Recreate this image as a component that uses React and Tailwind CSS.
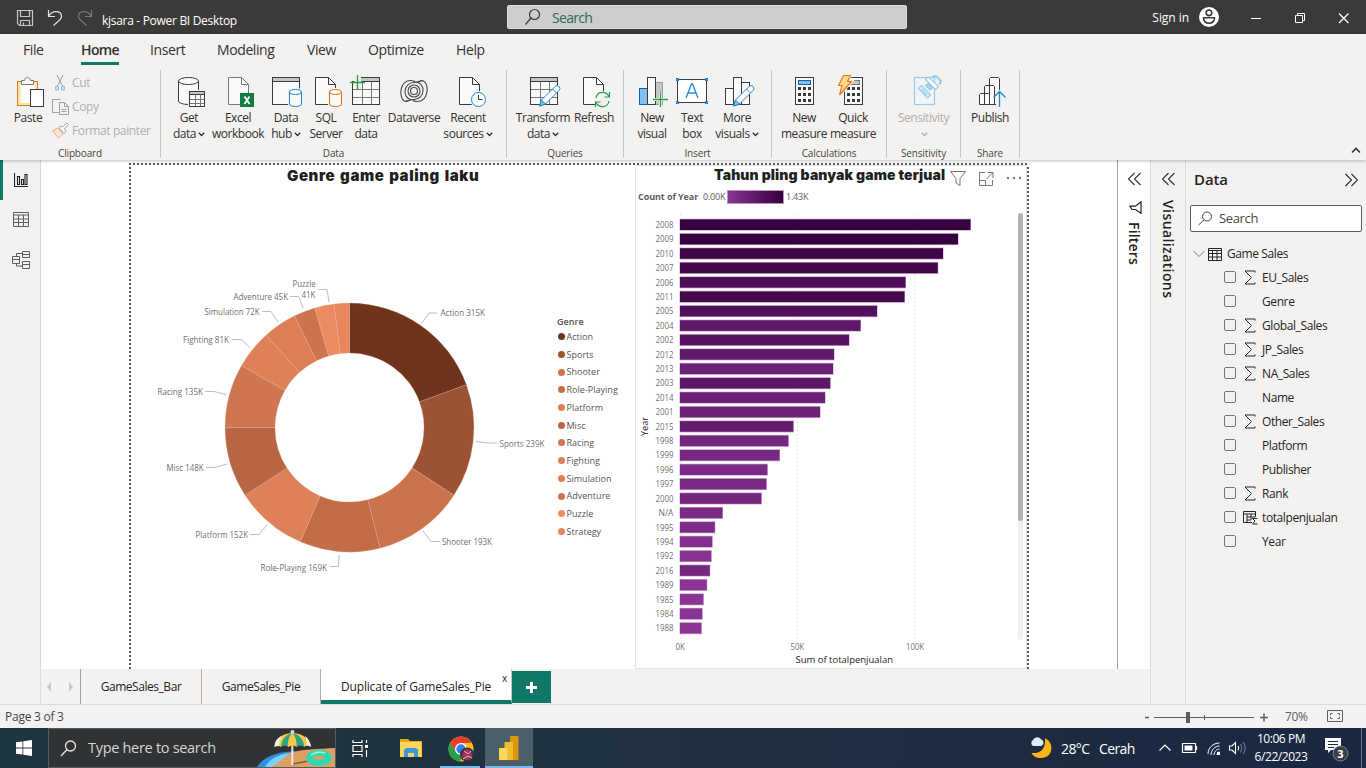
import React from "react";

const INK = "#3b3a39";

/* Icon frame: the viewBox origin is the drawing's own origin */
function Ic({ x, y = 74, w = 36, h = 34, children, className = "" }) {
  return (
    <svg className={"shrink-0 " + className} width={w} height={h} viewBox={`${x} ${y} ${w} ${h}`} fill="none" stroke={INK} strokeWidth="1">
      {children}
    </svg>
  );
}

function Page({ x, color = INK }) {
  return (
    <g stroke={color} fill="#fafafa">
      <path d={`M${x} 77.5h13l7 7v20h-20z`} />
      <path d={`M${x + 13} 77.5v7h7`} fill="none" />
    </g>
  );
}

function Grid({ x, y, s, head = 4, n = 3 }) {
  const step = (s - head) / n;
  return (
    <g>
      <rect x={x} y={y} width={s} height={s} fill="#fafafa" />
      <rect x={x} y={y} width={s} height={head} fill="#c8c6c4" />
      {Array.from({ length: n - 1 }, (_, i) => (
        <path key={i} stroke="#797775" d={`M${x} ${Math.round(y + head + step * (i + 1)) + 0.5}h${s}M${Math.round(x + (s / n) * (i + 1)) + 0.5} ${y + head}v${s - head}`} />
      ))}
      <rect x={x} y={y} width={s} height={s} />
    </g>
  );
}

function Cyl({ x, y, w, h, r, color = INK }) {
  return (
    <g stroke={color} fill="#fafafa">
      <path d={`M${x} ${y + r}v${h - 2 * r}a${w / 2} ${r} 0 0 0 ${w} 0v${-(h - 2 * r)}`} />
      <ellipse cx={x + w / 2} cy={y + r} rx={w / 2} ry={r} />
    </g>
  );
}

function Pencil({ x, y }) {
  return (
    <g transform={`translate(${x} ${y})`} stroke="#1e88d2">
      <path d="M0 0l2-6L15.500-19.500a2.800 2.800 0 0 1 4 4L6-2z" fill="#fff" />
      <path d="M0 0l2-6 4 4z" fill="#83beec" />
      <path d="M13-17l4 4" />
    </g>
  );
}

function Calc({ x, blue }) {
  const dots = [];
  for (let r = 0; r < 3; r++) for (let c = 0; c < 3; c++) dots.push([x + 2.5 + c * 5, 87 + r * 6]);
  return (
    <g>
      <rect x={x} y="77.500" width="18" height="27" fill="#fafafa" />
      <rect x={x + 3} y="80.500" width="12" height="4" fill={blue ? "#83beec" : "#c8c6c4"} stroke={blue ? "#1064ad" : "#797775"} />
      {dots.map(([a, b], i) => <rect key={i} x={a} y={b} width="3" height="3" fill={INK} stroke="none" />)}
    </g>
  );
}

function Caret({ light }) {
  return (
    <svg className="ml-0.5 inline-block" width="7" height="5" viewBox="0 0 7 5" fill="none" stroke={light ? "#b1afad" : "#323130"} strokeWidth="1.300">
      <path d="M.8.8l2.700 2.700L6.200.8" />
    </svg>
  );
}

function Btn({ width, a, b, caret, light, children }) {
  return (
    <div className={"flex shrink-0 flex-col items-center " + width + (light ? " text-[#b1afad]" : "")}>
      {children}
      <div className="mt-0.5 flex h-4 items-center whitespace-nowrap">{a}</div>
      <div className="flex h-4 items-center whitespace-nowrap">{b}{caret && <Caret light={light} />}</div>
    </div>
  );
}

function Group({ width, label, pad = "", children }) {
  return (
    <div className={"flex h-[88px] shrink-0 flex-col border-r border-[#c8c6c4] " + width}>
      <div className={"flex h-[75px] pt-1 " + pad}>{children}</div>
      <div className="h-[13px] text-center text-[10px] leading-[16px] tracking-[-0.150px] text-[#484644]">{label}</div>
    </div>
  );
}

function TitleBar() {
  return (
    <header className="flex h-[34px] shrink-0 items-center bg-[#3b3a39] text-white">
      <svg width="102" height="34" fill="none" stroke="#e1dfdd" strokeWidth="1.200">
        <path d="M17.500 10.500h15v15h-13l-2-2zM20.500 10.500v6h9v-6M20.500 25.500v-5h9v5M23.500 25v-2.500" stroke="#c8c6c4" />
        <path d="M48.500 10v6.500h6.500M49 16c3-6 12-5.500 12.500 0 .3 3.500-3.500 5-8 9.500" />
        <path d="M91.500 10v6.500H85M91 16c-3-6-12-5.500-12.500 0-.3 3.500 3.500 5 8 9.500" stroke="#797775" />
      </svg>
      <div className="w-[405px] pt-2 text-[12px] tracking-[-0.300px]">kjsara - Power BI Desktop</div>
      <div className="flex h-6 w-[400px] items-center rounded-[2px] border border-[#dddbd9] bg-[#cecdcb] pl-4 text-[14px] tracking-[-0.700px] text-[#2b6a5c]">
        <svg className="mr-[11px]" width="17" height="18" fill="none" stroke="#3b3a39" strokeWidth="1.200"><circle cx="10.500" cy="6.500" r="5" /><path d="M7 10L1.500 16.500" /></svg>
        Search
      </div>
      <div className="ml-auto flex items-center">
        <span className="pt-0.5 text-[12px] tracking-[-0.050px]">Sign in</span>
        <svg className="ml-[10px]" width="20" height="20" fill="none" stroke="#3b3a39" strokeWidth="1.600">
          <circle cx="10" cy="10" r="10" fill="#fff" stroke="none" /><circle cx="10" cy="5.800" r="2.800" />
          <path d="M4.500 10.800h11c.3 3-2 5.500-5.500 5.500s-5.800-2.500-5.500-5.500z" />
        </svg>
        <svg width="147" height="34" fill="none" stroke="#fff" strokeWidth="1">
          <path d="M32 18.500h10M76.500 15.500h7v7h-7zM78.500 15.500v-2h7v7h-2" />
          <path d="M120 13.500l9.500 9.500m0-9.500l-9.500 9.500" strokeWidth="1.300" />
        </svg>
      </div>
    </header>
  );
}

function Ribbon() {
  return (
    <section className="relative z-10 flex h-[126px] shrink-0 flex-col bg-[#f3f2f1] text-[#323130] shadow-[0_1px_3px_rgba(0,0,0,0.250)]">
      <nav className="flex h-9 text-[14px] leading-8 tracking-[-0.400px]">
        <span className="ml-[23px] w-[58px]">File</span>
        <span className="w-[69px]"><span className="inline-block h-[31px] border-b-[3px] border-[#117865] font-semibold leading-8 tracking-[-0.600px]">Home</span></span>
        <span className="w-[67px]">Insert</span>
        <span className="w-[90px]">Modeling</span>
        <span className="w-[61px]">View</span>
        <span className="w-[88px]">Optimize</span>
        <span>Help</span>
      </nav>
      <div className="flex text-[12px] tracking-[-0.450px]">
        <Group width="w-[161px]" label="Clipboard" pad="pl-[10px]">
          <Btn width="w-9" a="Paste">
            <Ic x={10}>
              <rect x="17.500" y="81.500" width="20" height="24" fill="#fbe3ae" stroke="#e07b1a" />
              <rect x="20.500" y="84" width="14.500" height="19" fill="#fff" stroke="none" />
              <path d="M21.500 84.500v-4h3c0-4 6-4 6 0h3v4z" fill="#fafafa" stroke="#797775" />
              <rect x="30.500" y="89.500" width="13" height="17" fill="#fff" />
            </Ic>
          </Btn>
          <div className="ml-[5px] flex flex-col tracking-[-0.370px] text-[#b1afad]">
            {[["Cut", "cut"], ["Copy", "copy"], ["Format painter", "fmt"]].map(([t, k], i) => (
              <div key={k} className={"flex h-6 items-center " + (i === 0 ? "-mt-[3px]" : "")}>
                <svg className="mr-[3px]" width="18" height="18" fill="none" stroke="#a19f9d">
                  {k === "cut" && <><path d="M6 1l6 12M12 1L6 13" /><path d="M4.500 12.500h3v3.500h-3zM10.500 12.500h3v3.500h-3z" stroke="#8fbfe0" fill="#cfe4f3" /></>}
                  {k === "copy" && <><path d="M8 14.500H1.500v-13h8M9 4.500h4.500l4 4v8H8.500v-12z" /><path d="M13.500 4.500v4h4M10.500 11.500h5M10.500 13.500h5" /></>}
                  {k === "fmt" && <><path d="M1.500 9l5-3 5.500 6-4.500 4z" fill="#fbe2cf" stroke="#e3b08a" /><path d="M8 6l5 5.500 2-2-1.500-2.500 4-4.500-1.500-1.500-4.500 4-2-1z" fill="#fff" /></>}
                </svg>
                {t}
              </div>
            ))}
          </div>
        </Group>

        <Group width="w-[346px]" label="Data" pad="pl-1">
          <Btn width="w-12" a="Get" b="data" caret>
            <Ic x={171}><Cyl x={178.5} y={77.5} w={20} h={27} r={3.5} /><path d="M188 90h17v17h-17z" fill="#f3f2f1" stroke="none" /><Grid x={189.5} y={91.500} s={15} head={3} /></Ic>
          </Btn>
          <Btn width="w-[50px]" a="Excel" b="workbook">
            <Ic x={220}><Page x={228.5} color="#797775" /><rect x="240" y="93" width="14" height="14" fill="#107c41" stroke="none" /><path d="M244.500 96.500l5 7.500m0-7.500l-5 7.500" stroke="#fff" strokeWidth="1.800" /></Ic>
          </Btn>
          <Btn width="w-[46px]" a="Data" b="hub" caret>
            <Ic x={268}><rect x="272.500" y="77.500" width="27" height="27" fill="#fafafa" /><rect x="272.500" y="77.500" width="27" height="4" fill="#c8c6c4" /><path d="M288 88.500h15v19h-15z" fill="#f3f2f1" stroke="none" /><Cyl x={289.5} y={89.500} w={12} h={17} r={2.500} color="#1e88d2" /></Ic>
          </Btn>
          <Btn width="w-[34px]" a="SQL" b="Server">
            <Ic x={308}><Page x={315.5} /><path d="M328 88h16v20h-16z" fill="#f3f2f1" stroke="none" /><Cyl x={329.5} y={89.500} w={12} h={17} r={2.500} color="#d8721a" /></Ic>
          </Btn>
          <Btn width="w-[46px]" a="Enter" b="data">
            <Ic x={348}><Grid x={352.5} y={77.500} s={27} /><path d="M349 75h12v6h-12zM354.500 80h6.500v9h-6.500z" fill="#f3f2f1" stroke="none" /><path d="M350 82.500h15M357.500 75v15" stroke="#2a9d48" strokeWidth="1.300" /></Ic>
          </Btn>
          <Btn width="w-[50px]" a="Dataverse">
            <Ic x={396}>
              <g strokeWidth="1.100" stroke="#484644">
                <circle cx="414" cy="91" r="6" /><circle cx="414" cy="91" r="3.500" />
                <path d="M423 80.500c-3 .5-5 2-9 2-5 0-9 4-9 9 0 4 2.500 7 5.500 8-2 1.500-4 2-6 1.500-6-3-5-20 5.500-20.500 3.500-.2 5 1 6 2" />
                <path d="M405 101.500c3-.5 5-2 9-2 5 0 9-4 9-9 0-4-2.500-7-5.500-8 2-1.500 4-2 6-1.500 6 3 5 20-5.500 20.500-3.500.2-5-1-6-2" />
              </g>
            </Ic>
          </Btn>
          <Btn width="w-[58px]" a="Recent" b="sources" caret>
            <Ic x={450}><Page x={459.5} /><circle cx="478.500" cy="99.500" r="8.500" fill="#f3f2f1" stroke="none" /><circle cx="478.500" cy="99.500" r="7" fill="#fff" stroke="#1e88d2" /><path d="M478.500 95v4.500h4" /></Ic>
          </Btn>
        </Group>

        <Group width="w-[117px]" label="Queries" pad="pl-[10px]">
          <Btn width="w-[52px]" a="Transform" b="data" caret>
            <Ic x={525}><Grid x={530.5} y={77.500} s={27} /><Pencil x={539.5} y={106} /></Ic>
          </Btn>
          <Btn width="w-[50px]" a="Refresh">
            <Ic x={576}><Page x={583.5} /><circle cx="602.500" cy="99.500" r="8.500" fill="#f3f2f1" stroke="none" /><path d="M596 98c1-7 10-7.500 13-1.500M609.500 92v5h-5M609 101c-1 7-10 7.500-13 1.500M595.500 107v-5h5" stroke="#2a9d48" strokeWidth="1.200" /></Ic>
          </Btn>
        </Group>

        <Group width="w-[148px]" label="Insert" pad="pl-[6px]">
          <Btn width="w-11" a="New" b="visual">
            <Ic x={634}>
              <rect x="639.500" y="88.500" width="8" height="16" fill="#83beec" stroke="#1064ad" /><rect x="655.500" y="82.500" width="7" height="22" fill="#c8c6c4" stroke="#a19f9d" />
              <rect x="647.500" y="77.500" width="8" height="27" fill="#fafafa" /><path d="M653 99.500h15M660.500 92v15" stroke="#f3f2f1" strokeWidth="3" /><path d="M653 99.500h15M660.500 92v15" stroke="#2a9d48" strokeWidth="1.300" />
            </Ic>
          </Btn>
          <Btn width="w-9" a="Text" b="box">
            <Ic x={674}><rect x="677.500" y="79.500" width="29" height="23" fill="#fff" /><g fill="#1e88d2" stroke="none"><path d="M676 78h3v3h-3zM705 78h3v3h-3zM676 101h3v3h-3zM705 101h3v3h-3z" /></g><path d="M686 98l5.500-14h1l5.500 14M688 93h8" stroke="#1e88d2" strokeWidth="1.300" /></Ic>
          </Btn>
          <Btn width="w-[54px]" a="More" b="visuals" caret>
            <Ic x={719}><g fill="#fafafa"><rect x="725.500" y="88.500" width="8" height="16" /><rect x="741.500" y="82.500" width="8" height="22" /><rect x="733.500" y="77.500" width="8" height="27" /></g><Pencil x={733.5} y={106} /></Ic>
          </Btn>
        </Group>

        <Group width="w-[115px]" label="Calculations" pad="pl-2">
          <Btn width="w-12" a="New" b="measure"><Ic x={785}><Calc x={794.5} blue /></Ic></Btn>
          <Btn width="w-[50px]" a="Quick" b="measure">
            <Ic x={835}><Calc x={844.5} /><path d="M843.500 75.500h7l-3 6h4l-12 13.500 2.500-9.500h-3.500z" fill="#ffd36b" stroke="#f3f2f1" strokeWidth="3" /><path d="M843.500 75.500h7l-3 6h4l-12 13.500 2.500-9.500h-3.500z" fill="#ffd98a" stroke="#e07b1a" strokeWidth="1.200" /></Ic>
          </Btn>
        </Group>

        <Group width="w-[74px]" label="Sensitivity" pad="justify-center">
          <Btn width="w-[60px]" a="Sensitivity" b="" caret light>
            <Ic x={905}>
              <g stroke="#9ccbe8" strokeWidth="1.200">
                <rect x="913.500" y="77.500" width="20" height="27" fill="#f0f5f9" />
                <path d="M917.500 88.500l3-3 9 9.500-3 3zM920.500 89l5.500 6" fill="#e3f0f8" />
                <path d="M924.500 79.500l3-2.500 10 9.500-3 3z" fill="#fff" /><path d="M931 77l4-1 5 5-1.500 3.500M927 84l4 4-2 1.500-4-4z" strokeWidth="2" />
              </g>
            </Ic>
          </Btn>
        </Group>

        <Group width="w-[59px]" label="Share" pad="justify-center">
          <Btn width="w-[50px]" a="Publish">
            <Ic x={972}>
              <g fill="#fafafa"><path d="M989.500 104.500v-26l1-1h8l1 1v26zM984.500 104.500v-18l1-1h8l1 1v18zM979.500 104.500v-10l1-1h8l1 1v10z" /></g>
              <path d="M996 90h10v18h-10z" fill="#f3f2f1" stroke="none" /><path d="M999.500 107V91.500M993.500 97.500l6-6 6 6" stroke="#1e88d2" strokeWidth="1.300" />
            </Ic>
          </Btn>
        </Group>
        <div className="ml-auto flex items-end pr-[5px] pb-1">
          <svg width="10" height="7" fill="none" stroke="#323130" strokeWidth="1.600"><path d="M1 5.500l4-4 4 4" /></svg>
        </div>
      </div>
    </section>
  );
}

function Rail() {
  return (
    <aside className="flex w-[41px] shrink-0 flex-col border-r border-[#dddbd9] bg-[#f3f2f1]">
      <div className="flex h-10 items-center border-l-[3px] border-[#117865] pl-[11px]">
        <svg width="14" height="15" fill="none" stroke="#201f1e"><path d="M.5 0v13.500H14M3.500 3.500h2v8h-2zM7.500 6.500h2v5h-2zM11 1.500h2v10h-2z" strokeWidth="1.100" /></svg>
      </div>
      <div className="flex h-10 items-center pb-0.5 pl-[13px]">
        <svg width="16" height="15" fill="none" stroke="#605e5c"><path d="M.5.5h15v14H.5zM.5 3h15M.5 7h15M.5 10.500h15M5.500 3v12M10.500 3v12" /></svg>
      </div>
      <div className="flex h-10 items-center pb-0.5 pl-3">
        <svg width="19" height="19" fill="none" stroke="#605e5c"><path d="M.5 6.500h7v7h-7zM.5 9.500h7M10.500 1.500h7v6h-7zM10.500 4.500h7M10.500 11.500h7v7h-7zM10.500 14.500h7M4.500 6.500v-3h6M4.500 13.500v2.500h6" /></svg>
      </div>
    </aside>
  );
}

const GENRES = [
  ["Action", 315, "#70341c"], ["Sports", 239, "#9c5335"], ["Shooter", 193, "#cb734d"], ["Role-Playing", 169, "#c36d48"],
  ["Platform", 152, "#de8058"], ["Misc", 148, "#b76543"], ["Racing", 135, "#cf754f"], ["Fighting", 81, "#de8058"],
  ["Simulation", 72, "#dc7f57"], ["Adventure", 45, "#cb744e"], ["Puzzle", 41, "#ec8a61"], ["Strategy", 32, "#e8875e"],
];

/* text, x, baseline, width, leader line */
const CALLOUTS = [
  ["Action 315K", 440.5, 316, 44.5, "422,323 429,313 437,313"],
  ["Sports 239K", 499.5, 447, 45, "476,441.5 488,443 497,443"],
  ["Shooter 193K", 442, 545, 50, "423,531 431,541.5 440,541.5"],
  ["Role-Playing 169K", 260.5, 571, 66.5, "339,555 338.500,566.5 330,566.5"],
  ["Platform 152K", 195.5, 538, 52.5, "267,525 259,534.5 250,534.5"],
  ["Misc 148K", 166.5, 471, 37, "227,464 215,467.5 206,467.5"],
  ["Racing 135K", 157.5, 395, 45.5, "226,394.5 214,391.5 205,391.5"],
  ["Fighting 81K", 183, 343, 46, "250,347.500 241,339.5 232,339.5"],
  ["Simulation 72K", 204.5, 315, 55, "278,322 271,311.5 262,311.5"],
  ["Adventure 45K", 233.5, 300, 54.5, "303,308 299,296.5 290,296.5"],
  ["Puzzle", 292.5, 287, 23, "329,302 327,289.5 318.500,289.5"],
  ["41K", 301.5, 298, 14, ""],
];

function Donut() {
  const total = GENRES.reduce((s, g) => s + g[1], 0);
  const cx = 349.5, cy = 427.5, R = 124.5, r = 74.5;
  let acc = 0;
  const pt = (a, q) => `${(cx + q * Math.sin(a)).toFixed(2)} ${(cy - q * Math.cos(a)).toFixed(2)}`;
  return (
    <svg className="shrink-0" width="420" height="400" viewBox="131 190 420 400">
      {GENRES.map(([n, v, c]) => {
        const a = (acc / total) * 2 * Math.PI;
        acc += v;
        const b = (acc / total) * 2 * Math.PI;
        return <path key={n} fill={c} stroke="#e9b79f" strokeOpacity="0.350" strokeWidth="0.700" d={`M${pt(a, R)}A${R} ${R} 0 0 1 ${pt(b, R)}L${pt(b, r)}A${r} ${r} 0 0 0 ${pt(a, r)}Z`} />;
      })}
      {CALLOUTS.map(([t, x, y, w, line]) => (
        <g key={t}>
          <polyline points={line} fill="none" stroke="#c0bebc" />
          <text x={x} y={y} textLength={w} lengthAdjust="spacingAndGlyphs" fontSize="8.700" fill="#707070">{t}</text>
        </g>
      ))}
    </svg>
  );
}

const YEARS = [
  ["2008", 971, "#36013f"], ["2009", 958.5, "#36013f"], ["2010", 943.5, "#400546"], ["2007", 938.3, "#43074a"], ["2006", 906, "#4e0e57"],
  ["2011", 905, "#47094f"], ["2005", 877.5, "#52115b"], ["2004", 861, "#5c1866"], ["2002", 849.5, "#581462"], ["2012", 834.5, "#611a6b"],
  ["2013", 833.5, "#6b2175"], ["2003", 830.7, "#5b1665"], ["2014", 825.5, "#691f73"], ["2001", 820.5, "#6e2379"], ["2015", 793.8, "#651c6f"],
  ["1998", 788.8, "#74277f"], ["1999", 780, "#782a83"], ["1996", 767.8, "#7b2b86"], ["1997", 766.8, "#7a2a85"], ["2000", 761.8, "#752780"],
  ["N/A", 723, "#7a2a85"], ["1995", 715.3, "#7d2c88"], ["1994", 712.7, "#832f8f"], ["1992", 711.7, "#893293"], ["2016", 710.3, "#752780"],
  ["1989", 707.3, "#8a3395"], ["1985", 703.8, "#8a3395"], ["1984", 702.7, "#8a3395"], ["1988", 701.8, "#8a3395"],
];

function BarPlot() {
  return (
    <svg className="shrink-0" width="390" height="461" viewBox="636 207 390 461" fontSize="8.700">
      {[680.5, 797.5, 914.5].map((x) => <path key={x} d={`M${x} 214V640`} stroke="#d6d4d2" strokeDasharray="1 3" />)}
      {YEARS.map(([n, end, c], i) => {
        const y = 224.7 + i * 14.41;
        return (
          <g key={n}>
            <text x={n === "N/A" ? 658.5 : 655.5} y={y + 3.2} textLength={n === "N/A" ? 15 : 18} lengthAdjust="spacingAndGlyphs" fill="#707070">{n}</text>
            <rect x="679.500" y={y - 6} width={end - 679.5} height="12" fill="#c9a8ce" />
            <rect x="680" y={y - 5.3} width={end - 680.5} height="10.600" fill={c} />
          </g>
        );
      })}
      <g fill="#707070">
        <text x="675.500" y="650" textLength="9.500" lengthAdjust="spacingAndGlyphs">0K</text>
        <text x="790.500" y="650" textLength="13.500" lengthAdjust="spacingAndGlyphs">50K</text>
        <text x="906" y="650" textLength="18" lengthAdjust="spacingAndGlyphs">100K</text>
      </g>
      <text x="795.500" y="663" fontSize="9.500" textLength="97.500" lengthAdjust="spacingAndGlyphs" fill="#252423">Sum of totalpenjualan</text>
      <text transform="translate(648 436) rotate(-90)" fontSize="9.500" textLength="19" lengthAdjust="spacingAndGlyphs" fill="#252423">Year</text>
      <rect x="1018" y="213" width="5" height="427" rx="2.500" fill="#f0efee" />
      <rect x="1018" y="213" width="5" height="308" rx="2.500" fill="#b3b3b3" />
    </svg>
  );
}

function Canvas() {
  return (
    <div className="flex min-w-0 flex-1 bg-white pl-[88px]">
      <div className="mt-[3px] flex w-[900px] flex-col">
        <div className="h-[2px] shrink-0 bg-[repeating-linear-gradient(90deg,#555_0_2px,transparent_2px_4px)]" />
        <div className="flex min-h-0 flex-1">
          <div className="w-[2px] shrink-0 bg-[repeating-linear-gradient(180deg,transparent_0_2px,#555_2px_4px)]" />
          <div className="flex w-[504px] flex-col">
            <div className="h-[25px] pl-[156px] font-[Inter] text-[15px] leading-[22px] font-black tracking-[0.600px] [word-spacing:1.200px] whitespace-nowrap text-[#201f1e]">Genre game paling laku</div>
            <div className="flex">
              <Donut />
              <div className="-ml-[1px] pt-[124px] text-[9px] tracking-[0.020px] text-[#555]">
                <div className="ml-[7px] h-[14px] leading-[15px] font-semibold">Genre</div>
                {GENRES.map(([n, , c]) => (
                  <div key={n} className="ml-2 flex h-[17.700px] items-center gap-[1.500px] whitespace-nowrap">
                    <svg className="shrink-0" width="7" height="7"><circle cx="3.500" cy="3.500" r="3.500" fill={c} /></svg>
                    {n}
                  </div>
                ))}
              </div>
            </div>
          </div>
          <div className="flex w-[392px] flex-col border border-[#e4e3e2]">
            <div className="flex h-[22px] shrink-0">
              <div className="w-[311px] pl-[78px] font-[Inter] text-[14px] leading-[18px] font-black tracking-[0.110px] whitespace-nowrap text-[#201f1e]">Tahun pling banyak game terjual</div>
              <svg width="79" height="22" fill="none" stroke="#797775">
                <path d="M3.500 5.500h15l-5.500 7v7l-4-2.500v-4.500z" />
                <path d="M38 6.500h-5.500v13h13V14M32.500 14.500h6v5M40.500 6.500h5.500V12M39.500 13L46 6.500" />
                <g fill="#797775" stroke="none"><circle cx="61" cy="12" r="1.200" /><circle cx="67" cy="12" r="1.200" /><circle cx="73" cy="12" r="1.200" /></g>
              </svg>
            </div>
            <div className="-mt-[1px] flex h-5 shrink-0 items-center pb-px pl-[2px] text-[9px] whitespace-nowrap text-[#605e5c]">
              <span className="w-[65px] font-bold tracking-[-0.080px]">Count of Year</span>
              <span className="w-6 tracking-[-0.200px]">0.00K</span>
              <span className="h-[14px] w-[57px] border border-[#b993bf] bg-gradient-to-r from-[#8a3395] to-[#36013f]" />
              <span className="ml-0.5 tracking-[-0.200px]">1.43K</span>
            </div>
            <BarPlot />
          </div>
          <div className="w-[2px] shrink-0 bg-[repeating-linear-gradient(180deg,transparent_0_2px,#555_2px_4px)]" />
        </div>
      </div>
    </div>
  );
}

function PageTabs() {
  return (
    <div className="flex h-[35px] shrink-0 bg-[#f3f2f1] text-[12px] leading-[35px] tracking-[-0.450px] text-[#252423]">
      <div className="flex w-10 items-center border-r border-[#a19f9d] pl-[5px]">
        <svg width="28" height="10" fill="#c8c6c4"><path d="M5 0v10L1 5zM23 0v10l4-5z" /></svg>
      </div>
      <div className="w-[121px] border-r border-[#b3b0ad] text-center">GameSales_Bar</div>
      <div className="w-[119px] border-r border-[#b3b0ad] text-center">GameSales_Pie</div>
      <div className="flex w-[191px] border-r border-b-4 border-r-[#c8c6c4] border-b-[#117865] bg-white pl-5 font-medium tracking-[-0.170px] whitespace-nowrap">
        <span className="w-[161px]">Duplicate of GameSales_Pie</span>
        <span className="text-[10px] leading-[18px]">x</span>
      </div>
      <div className="mt-0.5 flex h-8 w-[39px] items-center justify-center bg-[#117865]">
        <svg width="11" height="11" fill="#fff"><path d="M4 0h3v4h4v3H7v4H4V7H0V4h4z" /></svg>
      </div>
    </div>
  );
}

function Chevrons({ flip }) {
  return (
    <svg className={"shrink-0 " + (flip ? "rotate-180" : "")} width="13" height="14" fill="none" stroke="#323130" strokeWidth="1.100"><path d="M6.500 1l-6 6 6 6M12.500 1l-6 6 6 6" /></svg>
  );
}

const FIELDS = [["EU_Sales", 1], ["Genre", 0], ["Global_Sales", 1], ["JP_Sales", 1], ["NA_Sales", 1], ["Name", 0], ["Other_Sales", 1], ["Platform", 0], ["Publisher", 0], ["Rank", 1], ["totalpenjualan", 2], ["Year", 0]];

function DataPane() {
  return (
    <aside className="flex w-[181px] shrink-0 flex-col border-l border-[#dddbd9] bg-[#f3f2f1] text-[12px] tracking-[-0.400px] text-[#252423]">
      <div className="flex h-[39px] items-center justify-between pr-2 pl-2">
        <span className="text-[15px] font-semibold tracking-[-0.100px]">Data</span><Chevrons flip />
      </div>
      <div className="mt-1.5 ml-1 flex h-[27px] w-[172px] shrink-0 items-center rounded-[2px] border border-[#605e5c] bg-white pt-px pl-[7px] text-[13px] tracking-[-0.350px] text-[#484644]">
        <svg className="mr-[6px] mb-px" width="15" height="15" fill="none" stroke="#484644"><circle cx="9" cy="5.500" r="4.500" /><path d="M6 9L.5 14" /></svg>
        Search
      </div>
      <div className="mt-[10px] flex h-6 items-center pl-[7px]">
        <svg width="12" height="8" fill="none" stroke="#797775"><path d="M.5 1l5.500 5.500L11.500 1" /></svg>
        <svg className="mr-[5px] ml-[3px]" width="14" height="13" fill="none" stroke="#252423"><path d="M.5.5h13v12H.5zM.5 2.500h13M.5 5.500h13M.5 9h13M4.500 3v10M9 3v10" /></svg>
        Game Sales
      </div>
      {FIELDS.map(([n, k]) => (
        <div key={n} className="flex h-6 shrink-0 items-center pl-[38px]">
          <span className="-mt-[2px] h-3 w-3 rounded-[2px] border border-[#797775]" />
          <span className="-mt-[2px] ml-[6px] flex w-5 items-center">
            {k === 1 && <svg className="ml-0.5" width="12" height="15" fill="none" stroke="#252423"><path d="M11 2.500V1H1l6.500 6.500L1 14h10v-1.500" /></svg>}
            {k === 2 && <svg width="17" height="15" fill="none" stroke="#252423"><path d="M10 12.500H1.500v-11h12V7M1.500 4h12M5 4v8.500M9 4v6M5 7h8M5 10h4M15.500 8.500h-5l2.500 2.500-2.500 3h5" /></svg>}
          </span>
          {n}
        </div>
      ))}
    </aside>
  );
}

function StatusBar() {
  return (
    <div className="flex h-6 shrink-0 items-center border-t border-[#dddbd9] bg-[#f3f2f1] pl-[5px] text-[12px] tracking-[-0.250px] text-[#484644]">
      Page 3 of 3
      <div className="ml-auto flex items-center tracking-[-0.300px] text-[#605e5c]">
        <svg width="125" height="14" fill="none" stroke="#605e5c">
          <path d="M0 7.500h4M115 7.500h8M119 3.500v8" strokeWidth="1.500" /><path d="M9 7.500h100M59.500 5v5" /><path d="M41 2h4v11h-4z" fill="#605e5c" stroke="none" />
        </svg>
        <span className="ml-[15px] w-[42px]">70%</span>
        <svg className="mr-[23px]" width="16" height="13" fill="none" stroke="#605e5c"><path d="M.5.5h15v11H.5zM5.500 3.500h-2v2M3.500 7v1.500h2M10.500 3.500h2v2M12.500 7v1.500h-2" /></svg>
      </div>
    </div>
  );
}

function Taskbar() {
  return (
    <footer className="flex h-10 shrink-0 items-center bg-gradient-to-r from-[#20363f] via-[#20303f] to-[#1a2742] text-white">
      <svg className="mr-4 ml-4" width="16" height="16" fill="#fff"><path d="M0 2.300l6.500-.9v6.200H0zM7.300 1.300L16 0v7.600H7.300zM0 8.400h6.500v6.200L0 13.700zM7.300 8.400H16V16l-8.700-1.200z" /></svg>
      <div className="flex h-10 w-[288px] items-center border border-[#555b5e] bg-[#303233] pl-[11px] text-[14.500px] tracking-[-0.300px] whitespace-nowrap text-[#d6d6d6]">
        <svg className="mr-[11px]" width="17" height="17" fill="none" stroke="#e6e6e6" strokeWidth="1.300"><circle cx="10.500" cy="6" r="5" /><path d="M7 9.500L1 16" /></svg>
        <span className="w-[169px]">Type here to search</span>
        <svg className="shrink-0" width="78" height="38" viewBox="258 729 78 38">
          <path d="M258 767c5-8 14-13 28-15l10-1v16z" fill="#2f8fe0" /><path d="M266 767c5-8 12-12 24-14l8-1-6 15z" fill="#7fd0f5" />
          <path d="M272 767c8-3 13-10 19-14 10-4 29-4 45-5v19z" fill="#dca05f" />
          <path d="M294 764l20-4" stroke="#8a5a30" strokeWidth="1.500" />
          <path d="M293.300 732v33" stroke="#e9e4ee" strokeWidth="2" />
          <path d="M275.500 747c1-9 9-14 18-14s17 5 18.500 14c-3-2-5-2-6.500 0-3-2.500-6-2.500-8 0-3-2-5-2-8 0-2-2.500-5-2.500-7.500 0-2-2-4-2-6.500 0z" fill="#f7c843" />
          <path d="M282 747c.5-7 4-12 11-14-3 4-4.500 8-4 14-2-2.500-5-2.500-7 0zM297.500 747c.5-6-1-10-4-14 6 1 11 6 12 14-3-2.500-6-2.500-8 0z" fill="#2aa583" />
          <path d="M275.500 747c0-6 3-9 7-11l-1 4c-1 2-1.500 4-1.500 6.500-1.500-1-3-.7-4.500.5zM312 747c-.5-5-3-9-6-11 1.500 4 1.500 7 1.500 10 1.500-1 3-.5 4.500 1z" fill="#f3efdf" />
          <circle cx="293.500" cy="732" r="2" fill="#e9cfd6" />
          <ellipse cx="320" cy="758" rx="10" ry="5" fill="none" stroke="#2fd8b0" strokeWidth="6" /><path d="M312 755c4-3 10-3.500 14-2" stroke="#9df5df" strokeWidth="1.500" fill="none" />
        </svg>
      </div>
      <svg className="ml-4" width="17" height="17" fill="none" stroke="#fff" strokeWidth="1.200"><path d="M1 0v2.500h9V0M1 5.500h9v6H1zM1 17v-2.500h9V17M14.500 0v3M14.500 10v7" /><path d="M13 5h3v3h-3z" fill="#fff" stroke="none" /></svg>
      <svg className="ml-[31px]" width="22" height="20" viewBox="0 0 22 20"><path d="M0 1h8l2 2h12v16H0z" fill="#e8a91c" /><path d="M0 4h21l1 15H0z" fill="#ffd65c" /><path d="M4 19v-7l2-2h10l2 2v7h-4v-4H8v4z" fill="#3f97d8" /></svg>
      <div className="ml-[18px] flex h-10 w-10 flex-col items-center border-b-2 border-[#76b9ed] pt-2 pl-[3px]">
        <svg className="shrink-0" width="27" height="27" viewBox="0 0 27 27">
          <circle cx="13" cy="13" r="12.500" fill="#fbc116" /><path d="M2.200 6.700a12.500 12.500 0 0 1 21.600 0L13 7z" fill="#e33b2e" /><path d="M2.200 6.700A12.500 12.500 0 0 0 12 25.500l5-9.500H8z" fill="#24a148" />
          <path d="M2.200 6.700L8 16 13 7h11" fill="#e33b2e" />
          <circle cx="13" cy="13" r="6" fill="#fff" /><circle cx="13" cy="13" r="4.700" fill="#3b7ded" />
          <circle cx="19" cy="18.500" r="7" fill="#3a3448" /><path d="M14 21c1-6 4-9 6-8s5 4 4 8c-2 4-8 4-10 0z" fill="#a8324c" /><path d="M16 15l4 3 3-3M15 23l5-3 4 2" stroke="#c5bdd6" fill="none" />
        </svg>
      </div>
      <div className="ml-[5px] flex h-10 w-12 justify-center border-b-2 border-[#76b9ed] bg-[#4c5f68] pt-2">
        <svg width="20" height="24"><rect x="11" width="8.500" height="24" rx="1" fill="#d9960e" /><rect x="5.500" y="6" width="8.500" height="18" rx="1" fill="#f0bd2c" /><rect y="12" width="8.500" height="12" rx="1" fill="#fbd75a" /></svg>
      </div>
      <div className="ml-auto flex items-center">
        <svg width="24" height="24" viewBox="0 0 24 24"><path d="M16 2c10 5 8 20-4 20-5 0-8-2-9.500-5C12 18 17 12 16 2z" fill="#fdb515" /><path d="M4 10a3.500 3.500 0 0 1 0-6c2-4 7-3.500 8-.5 3 0 3.500 6 0 6.500z" fill="#dfe8f8" /></svg>
        <span className="ml-2 w-[38px] text-[14px] tracking-[-0.600px]">28°C</span>
        <span className="w-[60px] text-[14px] tracking-[-0.600px]">Cerah</span>
        <svg width="90" height="20" viewBox="1159 738 90 20" fill="none" stroke="#fff" strokeWidth="1.200">
          <path d="M1159.500 750.500l5.500-5.500 5.500 5.500M1182.500 743.500h13v9h-13zM1196.500 746v4" /><path d="M1184.500 745.500h8v5h-8z" fill="#fff" stroke="none" />
          <path d="M1208 754c0-6 5-11 11.500-11M1211 755c0-5 4-9 8.500-9M1214 755c0-3 2.500-6 5.500-6M1217 755c0-2 1-3 2.500-3" strokeWidth="1" /><path d="M1217 752h3v3h-3z" fill="#fff" stroke="none" />
          <path d="M1229.500 746h2.500l3.500-3.500v11L1232 750h-2.500zM1238 746q1.500 2 0 4.500" strokeWidth="1.100" /><path d="M1240.500 744q3 4 0 8.500M1243 742q4.500 6 0 12" stroke="#7d8799" strokeWidth="1" />
        </svg>
        <div className="mr-[1px] ml-[2px] w-[60px] text-center text-[12px] leading-[18px] tracking-[-0.450px] whitespace-nowrap"><div>10:06 PM</div><div>6/22/2023</div></div>
        <svg className="ml-3" width="26" height="28" viewBox="1324 736 26 28"><path d="M1325 740h16v12h-10l-3 3v-3h-3z" fill="#fff" /><path d="M1328 743.500h10M1328 746.500h10M1328 749.500h6" stroke="#1a2742" /><circle cx="1340.500" cy="755.500" r="7.500" fill="#3a3f48" stroke="#7b828c" /><text x="1340.500" y="759.500" textAnchor="middle" fontSize="11" fontWeight="700" fill="#fff">3</text></svg>
        <div className="ml-[11px] h-10 w-[5px] border-l border-[#6b7486]" />
      </div>
    </footer>
  );
}

export default function App() {
  return (
    <div className="flex h-[768px] w-[1366px] flex-col overflow-hidden bg-[#f3f2f1] font-['Open_Sans','Noto_Sans',sans-serif]">
      <TitleBar />
      <Ribbon />
      <main className="flex min-h-0 flex-1">
        <Rail />
        <div className="flex w-[1109px] shrink-0 flex-col">
          <div className="flex min-h-0 flex-1">
            <Canvas />
            <aside className="flex w-[33px] flex-col items-center border-l border-[#a19f9d] bg-white pt-3 text-[14px] text-[#252423]">
              <Chevrons />
              <svg className="mt-[15px] ml-[3px] shrink-0" width="13" height="13" fill="none" stroke="#252423" strokeWidth="1.200"><path d="M12 .7v11.600L6.500 8.500H3L1 5.200h5.500z" /></svg>
              <span className="mt-2 leading-[18px] font-semibold tracking-[0.200px] [writing-mode:vertical-rl]">Filters</span>
            </aside>
          </div>
          <PageTabs />
        </div>
        <aside className="flex w-[35px] shrink-0 flex-col items-center border-l border-[#dddbd9] pt-3 text-[14px] text-[#252423]">
          <Chevrons />
          <span className="mt-[14px] leading-[18px] font-semibold tracking-[0.400px] [writing-mode:vertical-rl]">Visualizations</span>
        </aside>
        <DataPane />
      </main>
      <StatusBar />
      <Taskbar />
    </div>
  );
}
